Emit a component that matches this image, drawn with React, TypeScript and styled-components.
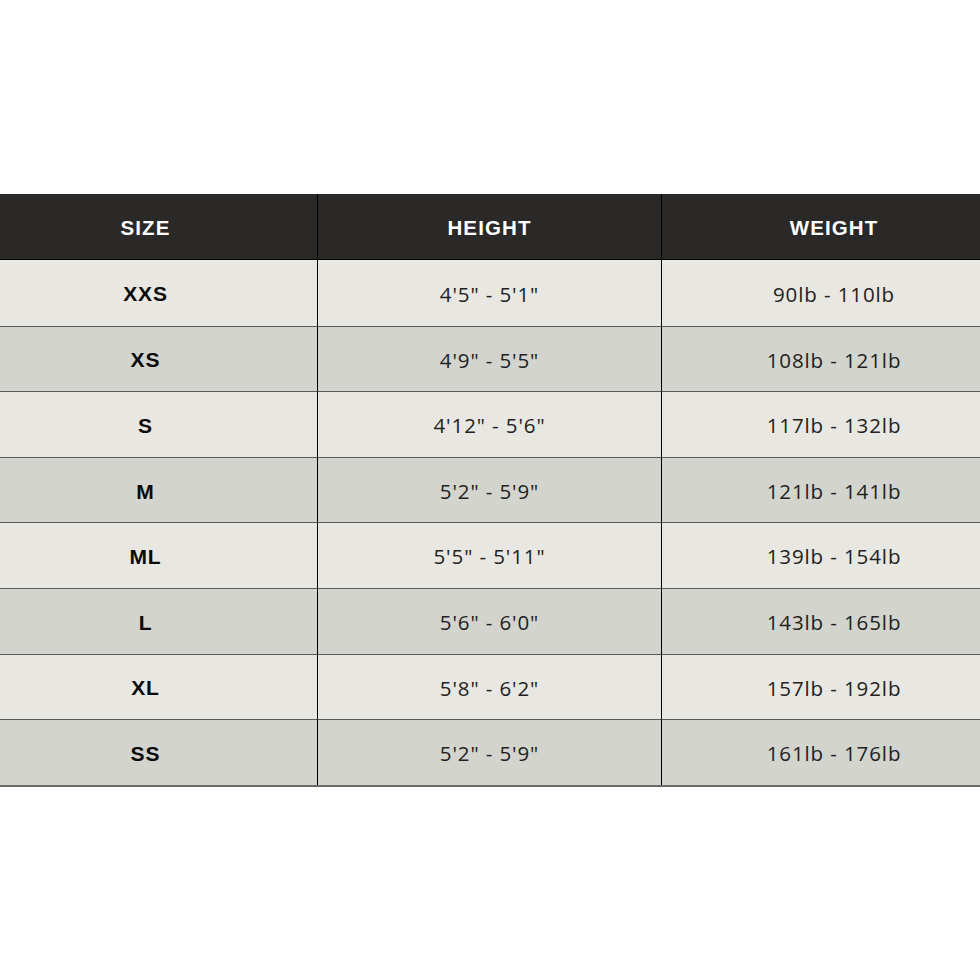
import React from "react";
import styled, { createGlobalStyle } from "styled-components";

const Global = createGlobalStyle`
  html, body { margin: 0; padding: 0; background: #ffffff; }
  body { width: 980px; height: 980px; overflow: hidden; }
`;

const Page = styled.div`
  width: 980px;
  height: 980px;
  background: #ffffff;
  padding-top: 194px;
  box-sizing: border-box;
  overflow: hidden;
`;

const Frame = styled.div`
  width: 980px;
  overflow: hidden;
`;

const Table = styled.div`
  width: 1032px;
  margin-left: -26px;
  display: grid;
  grid-template-columns: 344px 344px 344px;
  border-bottom: 2px solid #6b6b68;
`;

const HeadCell = styled.div<{ $last?: boolean }>`
  height: 66px;
  box-sizing: border-box;
  padding-top: 2px;
  background: #2a2927;
  color: #ffffff;
  display: flex;
  align-items: center;
  justify-content: center;
  font-family: "Liberation Sans", Arial, sans-serif;
  font-weight: 700;
  font-size: 20.5px;
  letter-spacing: 1.1px;
  border-right: ${(p) => (p.$last ? "none" : "1px solid #000")};
  border-bottom: 1px solid #000;
`;

const Cell = styled.div<{ $alt: boolean; $last?: boolean; $bold?: boolean; $first?: boolean }>`
  height: ${(p) => (p.$first ? "65.6px" : "64.6px")};
  background: ${(p) => (p.$alt ? "#d3d4ce" : "#e8e7e2")};
  color: ${(p) => (p.$bold ? "#0a0a0a" : "#222222")};
  display: flex;
  align-items: center;
  justify-content: center;
  font-family: ${(p) =>
    p.$bold ? '"Liberation Sans", Arial, sans-serif' : '"Open Sans", "Noto Sans", sans-serif'};
  font-weight: ${(p) => (p.$bold ? 700 : 400)};
  font-size: ${(p) => (p.$bold ? "21px" : "20.5px")};
  letter-spacing: 0.9px;
  line-height: 1;
  border-right: ${(p) => (p.$last ? "none" : "1px solid #000")};
  border-top: ${(p) => (p.$first ? "none" : "1px solid #5a5a58")};
`;

const CellText = styled.span`
  display: block;
  transform: translateY(1px);
`;

const rows = [
  ["XXS", `4'5" - 5'1"`, "90lb - 110lb"],
  ["XS", `4'9" - 5'5"`, "108lb - 121lb"],
  ["S", `4'12" - 5'6"`, "117lb - 132lb"],
  ["M", `5'2" - 5'9"`, "121lb - 141lb"],
  ["ML", `5'5" - 5'11"`, "139lb - 154lb"],
  ["L", `5'6" - 6'0"`, "143lb - 165lb"],
  ["XL", `5'8" - 6'2"`, "157lb - 192lb"],
  ["SS", `5'2" - 5'9"`, "161lb - 176lb"],
];

export default function App() {
  return (
    <>
      <Global />
      <Page>
        <Frame>
          <Table>
            <HeadCell>SIZE</HeadCell>
            <HeadCell>HEIGHT</HeadCell>
            <HeadCell $last>WEIGHT</HeadCell>
            {rows.map((r, i) => (
              <React.Fragment key={r[0]}>
                <Cell $alt={i % 2 === 1} $first={i === 0} $bold>
                  <CellText>{r[0]}</CellText>
                </Cell>
                <Cell $alt={i % 2 === 1} $first={i === 0}>
                  <CellText>{r[1]}</CellText>
                </Cell>
                <Cell $alt={i % 2 === 1} $first={i === 0} $last>
                  <CellText>{r[2]}</CellText>
                </Cell>
              </React.Fragment>
            ))}
          </Table>
        </Frame>
      </Page>
    </>
  );
}
